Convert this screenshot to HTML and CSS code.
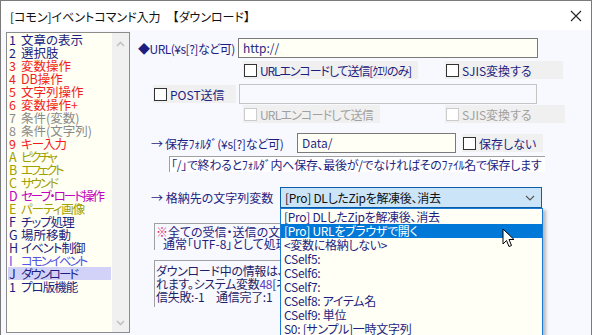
FILE: index.html
```html
<!DOCTYPE html>
<html>
<head>
<meta charset="utf-8">
<title>イベントコマンド入力</title>
<link rel="stylesheet" href="styles.css">
</head>
<body>
<div class='window'>
	<div class='titlebar'>
		<span class='title'>[コモン]イベントコマンド入力　【ダウンロード】</span>
		<svg class='close' width='12' height='12' viewBox='0 0 12 12'><path d='M1 1 L11 11 M11 1 L1 11' stroke='#222' stroke-width='1.1' fill='none'/></svg>
	</div>
	<div class='content'>
		<div class='cmd-list'>
			<ul class='items'>
				<li class='navy'><b>1</b>文章の表示</li>
				<li class='navy'><b>2</b>選択肢</li>
				<li class='red'><b>3</b>変数操作</li>
				<li class='red'><b>4</b>DB操作</li>
				<li class='red'><b>5</b>文字列操作</li>
				<li class='red'><b>6</b>変数操作+</li>
				<li class='gray'><b>7</b>条件(変数)</li>
				<li class='gray'><b>8</b>条件(文字列)</li>
				<li class='red tight1'><b>9</b>キー入力</li>
				<li class='olive tight3'><b>A</b>ピクチャ</li>
				<li class='olive tight3'><b>B</b>エフェクト</li>
				<li class='olive tight2'><b>C</b>サウンド</li>
				<li class='magenta tight2'><b>D</b>セーブ・ロード操作</li>
				<li class='olive tight1'><b>E</b>パーティ画像</li>
				<li class='navy tight1'><b>F</b>チップ処理</li>
				<li class='navy'><b>G</b>場所移動</li>
				<li class='navy tight1'><b>H</b>イベント制御</li>
				<li class='blue tight2'><b>I</b>コモンイベント</li>
				<li class='navy selected tight2'><b>J</b>ダウンロード</li>
				<li class='navy tight1'><b>1</b>プロ版機能</li>
			</ul>
			<div class='scrollbar'>
				<svg width='9' height='6' viewBox='0 0 9 6'><path d='M1 5 L4.5 1.5 L8 5' stroke='#c2c2c2' stroke-width='1.6' fill='none'/></svg>
				<svg width='9' height='6' viewBox='0 0 9 6'><path d='M1 1 L4.5 4.5 L8 1' stroke='#c2c2c2' stroke-width='1.6' fill='none'/></svg>
			</div>
		</div>

		<div class='form'>
			<div class='row row-url'>
				<span class='label label-url'>◆URL(¥s[?]など可)</span>
				<div class='field field-url'>http://</div>
			</div>
			<div class='row row-opt'>
				<label class='check check-enc'><span class='box'></span>URLエンコードして送信[ｸｴﾘのみ]</label>
				<label class='check check-sjis'><span class='box'></span>SJIS変換する</label>
			</div>
			<div class='row row-post'>
				<label class='check check-post'><span class='box'></span>POST送信</label>
				<div class='field field-post disabled'></div>
			</div>
			<div class='row row-opt2'>
				<label class='check check-enc2 disabled'><span class='box'></span>URLエンコードして送信</label>
				<label class='check check-sjis2 disabled'><span class='box'></span>SJIS変換する</label>
			</div>
			<div class='row row-folder'>
				<span class='label label-folder'>→ 保存ﾌｫﾙﾀﾞ(¥s[?]など可)</span>
				<div class='field field-folder'>Data/</div>
				<label class='check check-nosave'><span class='box'></span>保存しない</label>
			</div>
			<div class='row row-hint'>
				<div class='hint'>「/」で終わるとﾌｫﾙﾀﾞ内へ保存、最後が/でなければそのﾌｧｲﾙ名で保存します</div>
			</div>
			<div class='row row-var'>
				<span class='label label-var'>→ 格納先の文字列変数</span>
				<div class='combo'>
					<span>[Pro] DLしたZipを解凍後、消去</span>
					<svg width='10' height='6' viewBox='0 0 10 6'><path d='M1 1 L5 5 L9 1' stroke='#555' stroke-width='1.1' fill='none'/></svg>
				</div>
			</div>
			<div class='note note-charset'>
				<div><span class='mark'>※</span>全ての受信・送信の文字コードは</div>
				<div class='indent'>通常「UTF-8」として処理されます</div>
			</div>
			<div class='note note-info'>
				<div>ダウンロード中の情報は、システム変数に格納さ</div>
				<div>れます。システム変数<span class='num'>48</span>[ネット状態] 通信中:0 通</div>
				<div>信失敗:-1　通信完了:1</div>
			</div>

			<ul class='dropdown'>
				<li>[Pro] DLしたZipを解凍後、消去</li>
				<li class='hot'>[Pro] URLをブラウザで開く</li>
				<li>&lt;変数に格納しない&gt;</li>
				<li>CSelf5:</li>
				<li>CSelf6:</li>
				<li>CSelf7:</li>
				<li>CSelf8: アイテム名</li>
				<li>CSelf9: 単位</li>
				<li>S0: [サンプル]一時文字列</li>
			</ul>
			<svg class='cursor' width='14' height='21' viewBox='0 0 14 21'><path d='M1 1 L1 16 L4.5 12.5 L7 18.5 L9.5 17.5 L7 11.5 L12 11.5 Z' fill='#fff' stroke='#000' stroke-width='1' stroke-linejoin='round'/></svg>
		</div>
	</div>
</div>
</body>
</html>
```

FILE: styles.css
```css
body {
	margin: 0;
	font-family: "Noto Sans CJK JP", "Noto Sans", sans-serif;
	font-size: 12px;
	font-feature-settings: "palt";
}

.window {
	width: 592px;
	height: 335px;
	box-sizing: border-box;
	border: 1px solid #7a7a7a;
	border-bottom: none;
	overflow: hidden;
	background: #f8f8ff;
}

.titlebar {
	height: 29px;
	background: #fff;
	display: flex;
	align-items: center;
	justify-content: space-between;
	padding: 0 9px 0 9px;
}
.title {
	color: #111;
	font-size: 12px;
	margin-top: 1px;
}

.content {
	display: flex;
	height: 305px;
}

/* command list on the left */
.cmd-list {
	margin: 2px 0 0 5px;
	width: 124px;
	height: 301px;
	box-sizing: border-box;
	border: 1px solid #8c8c8c;
	background: #fffff4;
	display: flex;
	flex-shrink: 0;
}
.items {
	list-style: none;
	margin: 0;
	padding: 0 0 0 1px;
	width: 103px;
	font-size: 12.5px;
	line-height: 13px;
}
.items li {
	height: 13px;
	white-space: nowrap;
	padding-left: 1px;
	display: flex;
}
.items b {
	font-weight: normal;
	width: 12px;
	flex-shrink: 0;
	letter-spacing: 0;
}
.tight1 { letter-spacing: -1px; }
.tight2 { letter-spacing: -2px; }
.tight3 { letter-spacing: -2.5px; }
.navy { color: #1e1e80; }
.red { color: #f01e1e; }
.gray { color: #8a8a8a; }
.olive { color: #a0a000; }
.magenta { color: #c000c0; }
.blue { color: #5454e8; }
.selected { background: #d2d2f8; }

.scrollbar {
	margin-left: auto;
	width: 17px;
	background: #f0f0f0;
	display: flex;
	flex-direction: column;
	justify-content: space-between;
	align-items: center;
	padding: 8px 0 6px;
}

/* form on the right */
.form {
	position: relative;
	flex: 1;
	padding-top: 8px;
	color: #1e1e80;
}
.row {
	display: flex;
	align-items: center;
}
.label {
	white-space: nowrap;
	flex-shrink: 0;
}
.field {
	box-sizing: border-box;
	height: 20px;
	border: 1px solid #7a7a7a;
	background: #fffff6;
	padding: 0 4px;
	line-height: 17px;
	font-size: 12px;
	color: #2a2a82;
	flex-shrink: 0;
}
.field.disabled {
	border-color: #c4c4c4;
	background: #f8f8ff;
}
.check {
	display: flex;
	align-items: center;
	height: 18px;
	background: #f0f0f0;
	white-space: nowrap;
	flex-shrink: 0;
}
.box {
	width: 11px;
	height: 11px;
	border: 1px solid #333;
	background: #fff;
	margin: 0 3px 0 1px;
	flex-shrink: 0;
}
.check.disabled {
	color: #a0a0a0;
}
.check.disabled .box {
	border-color: #cccccc;
}

.row-url { height: 20px; }
.label-url { margin-left: 8px; width: 100px; letter-spacing: -0.5px; }
.field-url { width: 300px; }

.row-opt { margin-top: 3px; }
.check-enc { margin-left: 113px; width: 175px; letter-spacing: -1.1px; }
.check-sjis { margin-left: 27px; width: 118px; }

.row-post { margin-top: 5px; height: 20px; }
.check-post { margin-left: 23px; width: 83px; }
.field-post { margin-left: 3px; width: 298px; }

.row-opt2 { margin-top: 1px; }
.check-enc2 { margin-left: 113px; width: 137px; letter-spacing: -0.8px; }
.check-sjis2 { margin-left: 65px; width: 120px; }

.row-folder { margin-top: 10px; height: 20px; }
.label-folder { margin-left: 21px; width: 146px; letter-spacing: -0.3px; }
.field-folder { width: 159px; }
.check-nosave { margin-left: 6px; width: 81px; }

.row-hint { margin-top: 3px; }
.hint {
	margin-left: 39px;
	width: 376px;
	height: 16px;
	box-sizing: border-box;
	border-top: 1px solid #a0a0a0;
	border-left: 1px solid #a0a0a0;
	background: #fff;
	line-height: 15px;
	padding-left: 1px;
	white-space: nowrap;
	letter-spacing: -0.3px;
}

.row-var { margin-top: 15px; height: 21px; }
.label-var { margin-left: 21px; width: 129px; }
.combo {
	width: 262px;
	height: 21px;
	box-sizing: border-box;
	border: 1px solid #0a5fa8;
	background: #cce4f7;
	color: #111;
	display: flex;
	align-items: center;
	justify-content: space-between;
	padding: 0 6px 0 4px;
	white-space: nowrap;
	letter-spacing: -0.3px;
}

/* the open dropdown hides the rest of these boxes */
.note {
	margin-left: 24px;
	width: 127px;
	box-sizing: border-box;
	border-top: 1px solid #a0a0a0;
	border-left: 1px solid #a0a0a0;
	overflow: hidden;
	white-space: nowrap;
	padding-left: 1px;
}
.note-charset {
	margin-top: 15px;
	height: 27px;
	line-height: 12px;
	padding-top: 2px;
}
.mark { color: #e0306c; }
.indent { padding-left: 7px; }
.note-info {
	margin-top: 10px;
	height: 47px;
	line-height: 13px;
	padding-top: 3px;
	color: #1e1e64;
	letter-spacing: -0.3px;
}
.num { color: #6040c0; }

.dropdown {
	position: absolute;
	left: 150px;
	top: 178px;
	width: 263px;
	height: 140px;
	box-sizing: border-box;
	margin: 0;
	padding: 1px 0 0;
	list-style: none;
	background: #fffff6;
	border: 1px solid #1a7ad4;
	box-shadow: 3px 2px 3px rgba(0, 0, 0, 0.25);
	color: #1e1e80;
	letter-spacing: -0.3px;
}
.dropdown li {
	height: 14px;
	line-height: 14px;
	padding-left: 3px;
	white-space: nowrap;
}
.dropdown .hot {
	background: #0078d7;
	color: #fff;
}

.cursor {
	position: absolute;
	left: 372px;
	top: 198px;
}
```
